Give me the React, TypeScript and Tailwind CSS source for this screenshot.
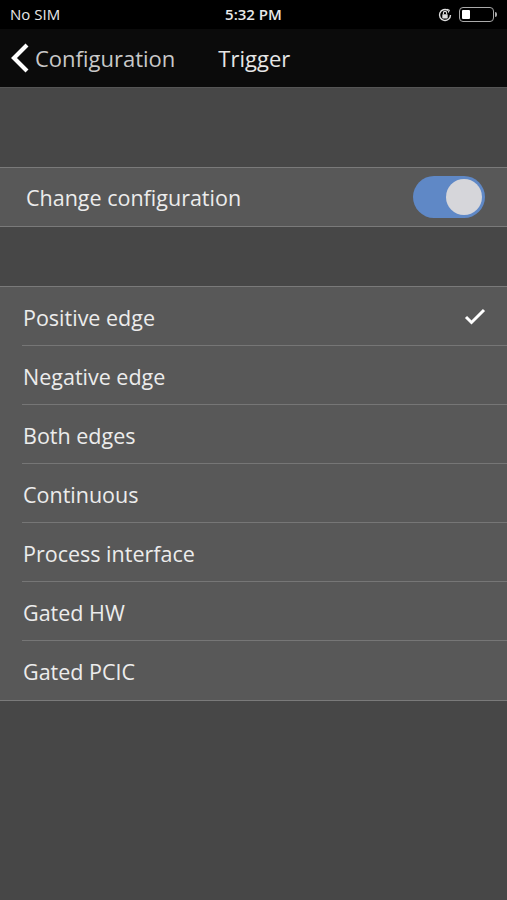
import { useState } from "react";

const OPTIONS = [
  "Positive edge",
  "Negative edge",
  "Both edges",
  "Continuous",
  "Process interface",
  "Gated HW",
  "Gated PCIC",
];

function StatusBar() {
  return (
    <div className="flex h-[29px] items-center justify-between bg-black px-[10px] text-[15px] text-[#e8e8e8]">
      <span>No SIM</span>
      <span className="absolute left-1/2 -translate-x-1/2 font-semibold">5:32 PM</span>
      <div className="flex items-center gap-[6px]">
        <svg width="16" height="16" viewBox="0 0 16 16" fill="none">
          <path d="M13.5 8A5.5 5.5 0 1 1 11 3.4" stroke="#ddd" strokeWidth="1.4" />
          <path d="M10 2.2l2.2 1-1 2.2" stroke="#ddd" strokeWidth="1.2" fill="none" />
          <rect x="5.3" y="7.2" width="5.4" height="4.2" rx="0.6" fill="#ddd" />
          <path d="M6.4 7.2V6a1.6 1.6 0 0 1 3.2 0v1.2" stroke="#ddd" strokeWidth="1.1" />
        </svg>
        <div className="flex items-center">
          <div className="flex h-[15px] w-[35px] items-center rounded-[4px] border border-[#aaa] p-[2px]">
            <div className="h-full w-[8px] rounded-[1px] bg-white" />
          </div>
          <div className="ml-[1px] h-[5px] w-[2px] rounded-r bg-[#aaa]" />
        </div>
      </div>
    </div>
  );
}

function NavBar() {
  return (
    <div className="flex h-[58px] items-center bg-[#0b0b0b] text-[22px]">
      <svg width="22" height="32" viewBox="0 0 22 32" className="ml-[9px]">
        <path d="M18 3L5 16l13 13" stroke="white" strokeWidth="4.2" fill="none" strokeLinecap="butt" />
      </svg>
      <span className="ml-[4px] text-[#c8c8c8]">Configuration</span>
      <span className="ml-[43px] text-[#e6e6e6]">Trigger</span>
    </div>
  );
}

function Toggle({ on, onClick }: { on: boolean; onClick: () => void }) {
  return (
    <button
      type="button"
      onClick={onClick}
      className={`flex h-[42px] w-[72px] items-center rounded-full px-[3px] ${on ? "justify-end bg-[#5f88c6]" : "justify-start bg-[#777]"}`}
    >
      <span className="h-[36px] w-[36px] rounded-full bg-[#d6d6da]" />
    </button>
  );
}

export default function App() {
  const [change, setChange] = useState(true);
  const [selected, setSelected] = useState(0);

  return (
    <div
      className="relative flex min-h-[900px] w-[507px] flex-col bg-[#474747]"
      style={{ fontFamily: '"Open Sans", "Noto Sans", sans-serif' }}
    >
      <StatusBar />
      <NavBar />
      <div className="h-[1px] bg-[#555]" />

      <div className="mt-[79px] flex h-[60px] items-center justify-between border-y border-[#7a7a7a] bg-[#585858] pl-[26px] pr-[22px]">
        <span className="pt-[3px] text-[21.5px] text-[#ececec]">Change configuration</span>
        <Toggle on={change} onClick={() => setChange(!change)} />
      </div>

      <div className="mt-[59px] border-y border-[#7a7a7a] bg-[#585858]">
        {OPTIONS.map((opt, i) => (
          <button
            key={opt}
            type="button"
            onClick={() => setSelected(i)}
            className="flex w-full pl-[22px] text-left"
          >
            <div
              className={`flex h-[59px] flex-1 items-center justify-between pr-[21px] ${i < OPTIONS.length - 1 ? "border-b border-[#767676]" : ""}`}
            >
              <span className="pl-[1px] pt-[4px] text-[21.5px] text-[#ececec]">{opt}</span>
              {selected === i && (
                <svg width="22" height="18" viewBox="0 0 22 18">
                  <path d="M2 10l5.5 5.5L20 3" stroke="white" strokeWidth="3" fill="none" />
                </svg>
              )}
            </div>
          </button>
        ))}
      </div>
    </div>
  );
}
